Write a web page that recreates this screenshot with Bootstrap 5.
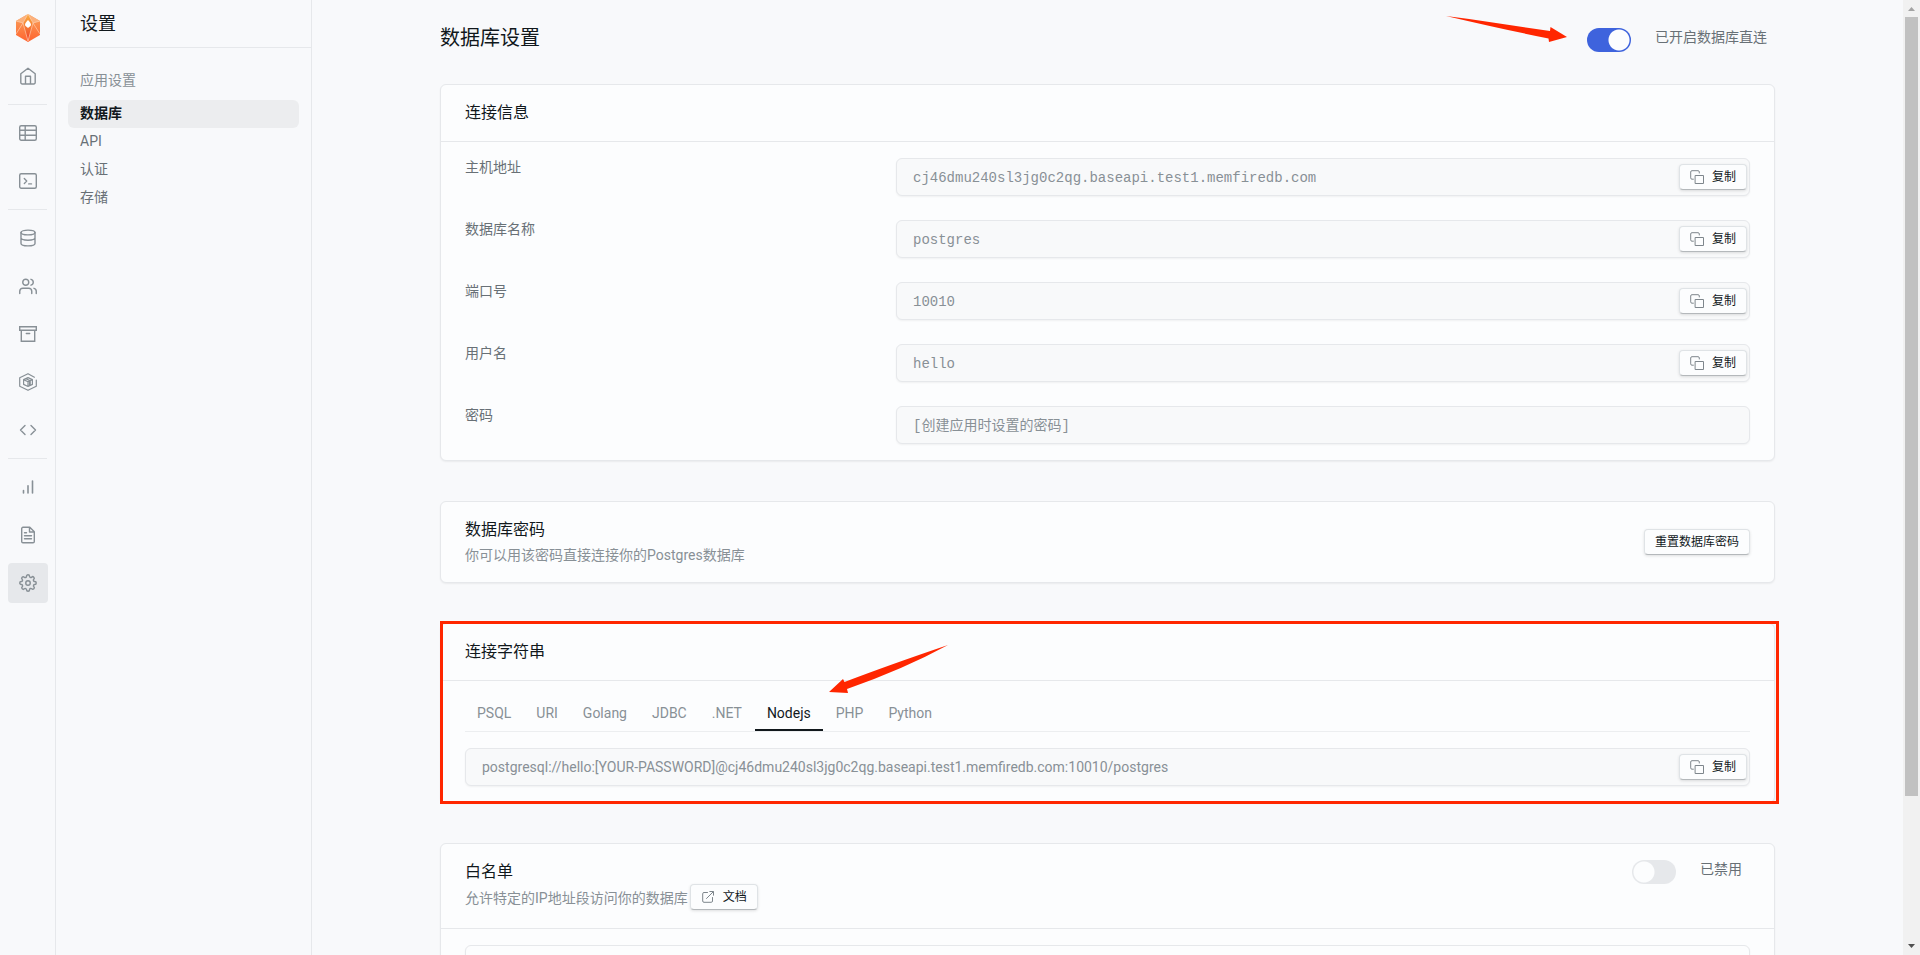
<!DOCTYPE html>
<html lang="zh-CN">
<head>
<meta charset="utf-8">
<meta name="viewport" content="width=device-width, initial-scale=1">
<title>数据库设置</title>
<link href="https://cdn.jsdelivr.net/npm/bootstrap@5.3.0/dist/css/bootstrap.min.css" rel="stylesheet">
<style>
  :root { --line: #e6e8eb; --ink: #11181c; --soft: #687076; --faint: #889096; --alert: #ff2600; }
  body { background: #f8f9fb; color: var(--ink); font-family: Roboto, "Noto Sans CJK SC", sans-serif; font-size: 14px; line-height: 20px; }
  .rail { width: 56px; border-right: 1px solid var(--line); padding: 8px 0 8px 8px; }
  .rail-link { width: 40px; height: 40px; border-radius: 4px; color: var(--faint); }
  .rail-link.active { background: #e6e8eb; }
  .rail-line { width: 39px; height: 1px; background: var(--line); }
  .icon { fill: none; stroke: currentColor; stroke-linecap: round; stroke-linejoin: round; }
  .side { width: 256px; border-right: 1px solid var(--line); }
  .side-head { height: 48px; border-bottom: 1px solid var(--line); font-size: 18px; padding-left: 24px; }
  .side-menu { padding: 22px 12px; }
  .side-menu h2, .side-menu a { font-size: 14px; line-height: 20px; padding: 3px 12px 5px; margin: 0; border-radius: 6px; font-weight: 400; }
  .side-menu h2 { color: var(--faint); margin-bottom: 10px; padding: 0 12px; }
  .side-menu a { color: var(--soft); text-decoration: none; }
  .side-menu a.active { background: #ecedef; color: var(--ink); font-weight: 600; }
  .page { padding: 24px 128px 0; }
  .page h1 { font-size: 20px; line-height: 28px; font-weight: 400; margin: 0; }
  .page-head { height: 28px; margin-bottom: 32px; }
  .panel { background: #fcfdfe; border: 1px solid var(--line); border-radius: 6px; box-shadow: 0 1px 2px rgba(0,0,0,.06); margin-bottom: 40px; }
  .panel-top { padding: 16px 24px; }
  .panel-top.ruled { border-bottom: 1px solid var(--line); }
  .panel-main { padding: 16px 24px; }
  .panel h2 { font-size: 16px; line-height: 24px; font-weight: 400; margin: 0; }
  .hint { color: var(--faint); margin: 0; }
  .panel p.hint { line-height: 18px; padding-bottom: 2px; }
  .soft { color: var(--soft); line-height: 18px; }
  .field { height: 38px; background: #f8f9fa; border: 1px solid var(--line); border-radius: 6px; box-shadow: 0 1px 2px rgba(0,0,0,.05); padding: 0 2px 0 16px; }
  .field input { border: 0; background: none; outline: 0; padding: 0; color: var(--faint); min-width: 0; }
  .field .code { font-family: "Liberation Mono", "Noto Sans CJK SC", monospace; padding-top: 2px; }
  .btn-plain { --bs-btn-font-size: 12px; --bs-btn-line-height: 16px; --bs-btn-padding-x: 10px; --bs-btn-padding-y: 4px; --bs-btn-border-radius: 4px; --bs-btn-color: #11181c; --bs-btn-bg: #fcfdfe; --bs-btn-border-color: #dfe3e6; border-bottom-color: #b4b8bb; box-shadow: 0 1px 3px rgba(0,0,0,.12); height: 26px; white-space: nowrap; }
  .btn-plain svg { color: #7e868c; }
  .form-check-input.toggle-box[type=checkbox] { width: 44px; height: 24px; margin: 0; border: 0; border-radius: 12px; background-color: #e6e8eb; background-image: radial-gradient(circle, #fcfdfe 10px, transparent 11px); background-size: 24px 24px; background-repeat: no-repeat; background-position: left center; }
  .form-check-input.toggle-box[type=checkbox]:checked { background-color: #3e63dd; background-position: right center; }
  .tabs { border-bottom: 1px solid #eceef0; height: 35px; gap: 1px; }
  .tabs button { border: 0; background: none; color: var(--faint); padding: 6px 12px; border-bottom: 2px solid transparent; }
  .tabs button.active { color: var(--ink); border-color: var(--ink); }
  .doc-row { height: 28px; gap: 2px; }
  .frame { inset: -2px -4px -1px 0; border: 3px solid var(--alert); pointer-events: none; }
  .arrow { fill: var(--alert); pointer-events: none; }
  .arrow-toggle { right: 207px; top: -8px; }
  .arrow-tab { left: 389px; top: 22px; }
  .bar { width: 17px; background: #f1f1f1; }
  .bar-end { height: 17px; }
  .bar-thumb { width: 13px; background: #c1c1c1; }
</style>
</head>
<body class="vh-100 overflow-hidden d-flex">
<svg class="d-none" aria-hidden="true">
  <symbol id="copy" viewBox="0 0 14 14"><path d="M5.500 5.500h8v8h-8zM3.400 9.200H2A1.300 1.300 0 0 1 .7 7.900V2A1.300 1.300 0 0 1 2 .7h6A1.300 1.300 0 0 1 9.300 2v1"/></symbol>
</svg>

<nav class="rail flex-shrink-0 d-flex flex-column gap-2" aria-label="主导航">
  <a href="#" class="rail-link d-flex align-items-center justify-content-center" aria-label="首页">
    <svg width="24" height="28" viewBox="0 0 24 28">
      <defs><linearGradient id="lg" x2="0" y2="1"><stop stop-color="#f9a35c"/><stop offset="1" stop-color="#ff6430"/></linearGradient>
      <linearGradient id="lr" x2="0" y2="1"><stop stop-color="#fbb03f"/><stop offset="1" stop-color="#ee3d2a"/></linearGradient></defs>
      <path fill="url(#lg)" d="M12 0 24 7v14l-12 7L0 21V7z"/>
      <path fill="#fbb07c" d="M12 0 0 7l7 2zM12 0l12 7-7 2z"/>
      <path fill="url(#lr)" d="M12 0 17 9l-5 18L7 9z"/>
      <path fill="none" stroke="#ffd9bd" stroke-width=".6" d="M0 7l7 2 5-9 5 9 7-2M7 9 0 20M17 9l7 11M7 9l5 18 5-18"/>
      <path fill="#fff" d="M12 6c2 2 3 3.500 3 5 0 1-2 2-3 3-1-1-3-2-3-3 0-1.500 1-3 3-5z"/>
    </svg>
  </a>
  <a href="#" class="rail-link d-flex align-items-center justify-content-center" aria-label="概览"><svg class="icon" width="18" height="18" viewBox="0 0 18 18" stroke-width="1.400"><path d="M1.800 6.800 9 1.300l7.200 5.500v8.600A1.500 1.500 0 0 1 14.700 17H3.300a1.500 1.500 0 0 1-1.500-1.600zM6.500 17V9.300h5V17"/></svg></a>
  <div class="rail-line"></div>
  <a href="#" class="rail-link d-flex align-items-center justify-content-center" aria-label="表"><svg class="icon" width="18" height="18" viewBox="0 0 18 18" stroke-width="1.400"><rect x=".7" y="1.700" width="16.600" height="14.600" rx="1.500"/><path d="M.7 6.200h16.600M.7 11.200h16.600M6.200 1.700v14.600"/></svg></a>
  <a href="#" class="rail-link d-flex align-items-center justify-content-center" aria-label="终端"><svg class="icon" width="18" height="18" viewBox="0 0 18 18" stroke-width="1.400"><rect x=".7" y="1.700" width="16.600" height="14.600" rx="1.500"/><path d="m5.300 6.600 2.400 2.400-2.400 2.600M9.700 11.900h2.800"/></svg></a>
  <div class="rail-line"></div>
  <a href="#" class="rail-link d-flex align-items-center justify-content-center" aria-label="数据库"><svg class="icon" width="18" height="18" viewBox="0 0 18 18" stroke-width="1.400"><ellipse cx="9" cy="3.500" rx="7" ry="2.400"/><path d="M2 3.500v11c0 1.300 3 2.400 7 2.400s7-1.100 7-2.400v-11M2 8.800c0 1.400 3 2.400 7 2.400s7-1 7-2.400"/></svg></a>
  <a href="#" class="rail-link d-flex align-items-center justify-content-center" aria-label="用户"><svg class="icon" width="18" height="18" viewBox="0 0 24 24" stroke-width="1.900"><path d="M17 22v-3a4 4 0 0 0-4-4H5a4 4 0 0 0-4 4v3M23 22v-3a4 4 0 0 0-3-3.870M16 3.130a4 4 0 0 1 0 7.750"/><circle cx="9" cy="7" r="4"/></svg></a>
  <a href="#" class="rail-link d-flex align-items-center justify-content-center" aria-label="存储"><svg class="icon" width="18" height="18" viewBox="0 0 18 18" stroke-width="1.400"><path stroke-linejoin="miter" d="M.7 1.700h16.600v3.600H.7zM2.300 5.300v10.900h13.400V5.300M7.300 8.500h3.400"/></svg></a>
  <a href="#" class="rail-link d-flex align-items-center justify-content-center" aria-label="函数"><svg class="icon" width="18" height="18" viewBox="0 0 18 18" stroke-width="1.200"><path d="M15.400 4.200 9 .7.700 4.800v8.400L9 17.300l8.300-4.100V7"/><path d="M9 4.600 4.600 6.600v4.800L9 13.500l4.400-2.100V6.600zM4.600 6.600 9 8.700l4.400-2.100M9 8.700v4.800M6.800 5.600l4.400 2.100v4.600M10.500 8.400v4"/></svg></a>
  <a href="#" class="rail-link d-flex align-items-center justify-content-center" aria-label="代码"><svg class="icon" width="18" height="18" viewBox="0 0 18 18" stroke-width="1.400"><path d="M6 4.500 1.500 9 6 13.500M12 4.500 16.500 9 12 13.500"/></svg></a>
  <div class="rail-line"></div>
  <a href="#" class="rail-link d-flex align-items-center justify-content-center" aria-label="报表"><svg class="icon" width="18" height="18" viewBox="0 0 18 18" stroke-width="1.600"><path d="M4.500 12.500V15M9 7.800V15M13.500 3v12"/></svg></a>
  <a href="#" class="rail-link d-flex align-items-center justify-content-center" aria-label="日志"><svg class="icon" width="18" height="18" viewBox="0 0 18 18" stroke-width="1.400"><path d="M10.800 1.300H4A1.300 1.300 0 0 0 2.700 2.600v12.800A1.300 1.300 0 0 0 4 16.700h10a1.300 1.300 0 0 0 1.300-1.300V5.800zM10.500 1.500V6H15M5.500 6.700h2M5.500 9.700h7M5.500 12.700h7"/></svg></a>
  <a href="#" class="rail-link active d-flex align-items-center justify-content-center" aria-label="设置"><svg class="icon" width="18" height="18" viewBox="0 0 24 24" stroke-width="1.900"><circle cx="12" cy="12" r="3"/><path d="M19.400 15a1.650 1.650 0 0 0 .33 1.820l.06.06a2 2 0 0 1-2.830 2.830l-.06-.06a1.650 1.650 0 0 0-1.820-.33 1.650 1.650 0 0 0-1 1.510V21a2 2 0 0 1-4 0v-.09A1.650 1.650 0 0 0 9 19.400a1.650 1.650 0 0 0-1.820.33l-.06.06a2 2 0 0 1-2.830-2.830l.06-.06a1.650 1.650 0 0 0 .33-1.820 1.650 1.650 0 0 0-1.510-1H3a2 2 0 0 1 0-4h.09A1.650 1.650 0 0 0 4.600 9a1.650 1.650 0 0 0-.33-1.820l-.06-.06a2 2 0 0 1 2.830-2.830l.06.06a1.650 1.650 0 0 0 1.820.33H9a1.650 1.650 0 0 0 1-1.510V3a2 2 0 0 1 4 0v.09a1.650 1.650 0 0 0 1 1.510 1.650 1.650 0 0 0 1.820-.33l.06-.06a2 2 0 0 1 2.830 2.830l-.06.06a1.650 1.650 0 0 0-.33 1.820V9a1.650 1.650 0 0 0 1.510 1H21a2 2 0 0 1 0 4h-.09a1.650 1.650 0 0 0-1.510 1z"/></svg></a>
</nav>

<aside class="side flex-shrink-0">
  <div class="side-head d-flex align-items-center">设置</div>
  <nav class="side-menu d-flex flex-column" aria-label="设置">
    <h2>应用设置</h2>
    <a href="#" class="active" aria-current="page">数据库</a>
    <a href="#">API</a>
    <a href="#">认证</a>
    <a href="#">存储</a>
  </nav>
</aside>

<main class="page flex-grow-1 overflow-hidden">
  <div class="page-head d-flex justify-content-between position-relative">
    <h1>数据库设置</h1>
    <div class="d-flex gap-4 pe-2">
      <input class="form-check-input toggle-box align-self-end" type="checkbox" role="switch" id="direct" checked>
      <label class="soft pt-1" for="direct">已开启数据库直连</label>
    </div>
    <svg class="arrow arrow-toggle position-absolute" width="122" height="28" viewBox="0 0 122 28"><path d="M0 0Q25 3 50 7L104 15 104.500 11 121 21 103 26 102.500 22.500Q60 14 0 0z"/></svg>
  </div>

  <section class="panel">
    <div class="panel-top ruled"><h2>连接信息</h2></div>
    <div class="panel-main d-flex flex-column gap-4">
      <div class="row g-2 mt-0">
        <label class="col-4 soft mt-0" for="host">主机地址</label>
        <div class="col-8 mt-0"><div class="field d-flex align-items-center"><input class="code flex-grow-1" id="host" readonly value="cj46dmu240sl3jg0c2qg.baseapi.test1.memfiredb.com"><button type="button" class="btn btn-plain d-flex align-items-center gap-2"><svg class="icon" width="14" height="14"><use href="#copy"/></svg>复制</button></div></div>
      </div>
      <div class="row g-2 mt-0">
        <label class="col-4 soft mt-0" for="dbname">数据库名称</label>
        <div class="col-8 mt-0"><div class="field d-flex align-items-center"><input class="code flex-grow-1" id="dbname" readonly value="postgres"><button type="button" class="btn btn-plain d-flex align-items-center gap-2"><svg class="icon" width="14" height="14"><use href="#copy"/></svg>复制</button></div></div>
      </div>
      <div class="row g-2 mt-0">
        <label class="col-4 soft mt-0" for="port">端口号</label>
        <div class="col-8 mt-0"><div class="field d-flex align-items-center"><input class="code flex-grow-1" id="port" readonly value="10010"><button type="button" class="btn btn-plain d-flex align-items-center gap-2"><svg class="icon" width="14" height="14"><use href="#copy"/></svg>复制</button></div></div>
      </div>
      <div class="row g-2 mt-0">
        <label class="col-4 soft mt-0" for="user">用户名</label>
        <div class="col-8 mt-0"><div class="field d-flex align-items-center"><input class="code flex-grow-1" id="user" readonly value="hello"><button type="button" class="btn btn-plain d-flex align-items-center gap-2"><svg class="icon" width="14" height="14"><use href="#copy"/></svg>复制</button></div></div>
      </div>
      <div class="row g-2 mt-0">
        <label class="col-4 soft mt-0" for="pass">密码</label>
        <div class="col-8 mt-0"><div class="field d-flex align-items-center"><input class="code flex-grow-1" id="pass" readonly value="[创建应用时设置的密码]"></div></div>
      </div>
    </div>
  </section>

  <section class="panel">
    <div class="panel-top d-flex align-items-center justify-content-between">
      <div>
        <h2 class="mb-1">数据库密码</h2>
        <p class="hint">你可以用该密码直接连接你的Postgres数据库</p>
      </div>
      <button type="button" class="btn btn-plain">重置数据库密码</button>
    </div>
  </section>

  <div class="position-relative">
    <section class="panel">
      <div class="panel-top ruled"><h2>连接字符串</h2></div>
      <div class="panel-main">
        <div class="tabs d-flex mb-3" role="tablist">
          <button type="button" role="tab">PSQL</button>
          <button type="button" role="tab">URI</button>
          <button type="button" role="tab">Golang</button>
          <button type="button" role="tab">JDBC</button>
          <button type="button" role="tab">.NET</button>
          <button type="button" role="tab" class="active" aria-selected="true">Nodejs</button>
          <button type="button" role="tab">PHP</button>
          <button type="button" role="tab">Python</button>
        </div>
        <div class="field d-flex align-items-center"><input class="flex-grow-1" aria-label="连接字符串" readonly value="postgresql://hello:[YOUR-PASSWORD]@cj46dmu240sl3jg0c2qg.baseapi.test1.memfiredb.com:10010/postgres"><button type="button" class="btn btn-plain d-flex align-items-center gap-2"><svg class="icon" width="14" height="14"><use href="#copy"/></svg>复制</button></div>
      </div>
    </section>
    <div class="frame position-absolute"></div>
    <svg class="arrow arrow-tab position-absolute" width="120" height="50" viewBox="0 0 120 50"><path d="M119 0Q75 24 18 44L19 48 0 47 14 34 15.500 37Q60 20 119 0z"/></svg>
  </div>

  <section class="panel">
    <div class="panel-top ruled d-flex justify-content-between">
      <div>
        <h2>白名单</h2>
        <div class="doc-row d-flex align-items-center hint">
          <span>允许特定的IP地址段访问你的数据库</span>
          <a href="#" class="btn btn-plain d-flex align-items-center gap-2 align-self-start"><svg class="icon" width="14" height="14" viewBox="0 0 14 14"><path d="M6.500 2.500H3A1.300 1.300 0 0 0 1.700 3.800V11A1.300 1.300 0 0 0 3 12.300h7.200A1.300 1.300 0 0 0 11.500 11V7.500M8.800 1.500h3.700v3.700M12.200 1.800 5.500 8.500"/></svg>文档</a>
        </div>
      </div>
      <div class="d-flex gap-4 pe-2">
        <input class="form-check-input toggle-box" type="checkbox" role="switch" id="allow">
        <label class="soft" for="allow">已禁用</label>
      </div>
    </div>
    <div class="panel-main"><div class="panel" style="height:64px"></div></div>
  </section>
</main>

<div class="bar flex-shrink-0 d-flex flex-column align-items-center" aria-hidden="true">
  <svg class="bar-end flex-shrink-0" width="17" viewBox="0 0 17 17"><path fill="#a3a3a3" d="m5 11 3.500-4 3.500 4z"/></svg>
  <div class="flex-grow-1"><div class="bar-thumb" style="height:84.6%"></div></div>
  <svg class="bar-end flex-shrink-0" width="17" viewBox="0 0 17 17"><path fill="#505050" d="m5 6 3.500 4L12 6z"/></svg>
</div>
<script src="https://cdn.jsdelivr.net/npm/bootstrap@5.3.0/dist/js/bootstrap.bundle.min.js"></script>
</body>
</html>
